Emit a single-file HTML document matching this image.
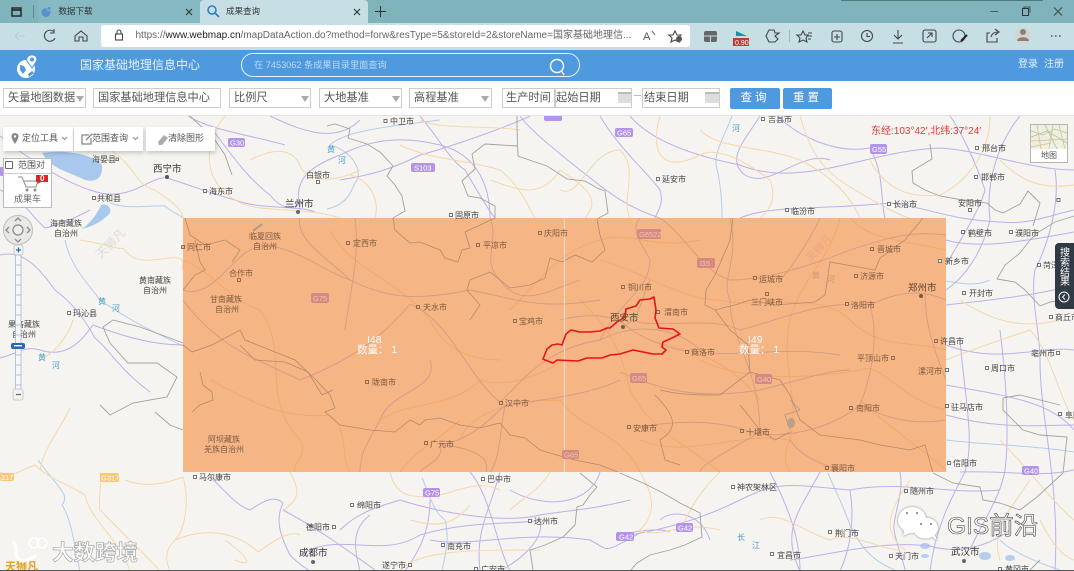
<!DOCTYPE html>
<html lang="zh"><head><meta charset="utf-8"><title>成果查询</title>
<style>
html,body{margin:0;padding:0;background:#f5f4f0}
#r{position:relative;width:1074px;height:571px;overflow:hidden;font-family:"Liberation Sans","Noto Sans CJK SC",sans-serif;filter:blur(.35px);background:#f5f4f0}
#r div,#r svg{position:absolute;box-sizing:border-box}
.f{border:1px solid #ccc;background:#fff;top:88px;height:20px;font-size:11.2px;color:#555;line-height:18px;padding-left:3px;white-space:nowrap;overflow:hidden}
.tri{width:0;height:0;border-left:4px solid transparent;border-right:4px solid transparent;border-top:6px solid #aaa;top:7px}
.cal{width:14px;height:11px;top:3px;background:#ddd;border-top:2px solid #bbb}
.btn{background:#4f9ade;color:#fff;top:88px;height:21px;border-radius:2px;font-size:11.5px;text-align:center;line-height:21px;letter-spacing:3px}
.ic{fill:none;stroke:#444;stroke-width:1.1}
.tool{top:127px;height:24px;background:#fff;box-shadow:1px 2px 4px rgba(0,0,0,.2)}
.tt{top:132px;font-size:9px;color:#555;line-height:13px;white-space:nowrap}
#m text{font-size:8px;fill:#444}
#m .b text{fill:#7c5a40}
#m .big{font-size:9.500px;fill:#333}
#m .riv text{fill:#4a9fd0;font-size:8px}
#m .sh text{font-size:7.500px;fill:#fff}
.pu{fill:none;stroke:#bdb0ea;stroke-width:1}
.or{fill:none;stroke:#f5d8ac;stroke-width:1}
.gr{fill:none;stroke:#a3a199;stroke-width:.9}
.bl{fill:none;stroke:#b5cdee;stroke-width:1}
.om{fill:none;stroke:#d49c84;stroke-width:.9}
.oo{fill:none;stroke:#f2a86c;stroke-width:.9}
.og{fill:none;stroke:#b58a6c;stroke-width:.8}
.sq{fill:#fff;stroke:#555;stroke-width:.8}
.bsq{fill:#f6b583;stroke:#7c5a40;stroke-width:.8}
</style></head><body><div id="r">

<!-- MAP -->
<svg id="m" style="left:0;top:116px" width="1074" height="455" viewBox="0 116 1074 455">
<rect x="0" y="116" width="1074" height="455" fill="#f5f4f0"/>
<path d="M42 153C60 150 90 152 102 165C103 176 98 183 85 180C70 172 52 170 42 153Z" fill="#a9c8ee"/>
<path d="M82 229C92 222 98 212 101 205C106 203 112 207 110 213C104 220 94 226 82 229Z" fill="#a9c8ee"/>
<g class="bl">
<path d="M110 203C130 210 150 205 165 206C172 212 178 214 183 218"/>
<path d="M65 240C70 265 85 280 100 300C115 310 128 320 183 346"/>
<path d="M38 460C60 490 70 495 62 505C72 520 75 550 80 571"/>
<path d="M327 209C345 205 350 195 355 183C365 170 350 150 330 145C345 130 400 125 440 120"/>
<path d="M732 116C725 135 715 150 716 165C720 180 722 200 722 218"/>
<path d="M946 281C960 283 975 287 990 280"/>
<path d="M422 478C430 495 432 510 445 520C450 540 445 555 442 571"/>
<path d="M828 473C835 490 845 510 850 525C860 545 870 560 895 570"/>
<path d="M946 440C985 445 1030 445 1074 452"/>
<path d="M1000 540C1010 550 1030 560 1060 570"/>
</g>
<ellipse cx="925" cy="546" rx="5" ry="3" fill="#b5cdee"/><ellipse cx="985" cy="556" rx="6" ry="4" fill="#b5cdee"/><ellipse cx="1010" cy="558" rx="5" ry="3" fill="#b5cdee"/><ellipse cx="925" cy="556" rx="4" ry="2" fill="#b5cdee"/>
<g class="pu">
<path d="M0 255C20 250 35 262 55 290C75 305 85 320 95 338C110 350 120 370 150 392"/>
<path d="M0 136C30 160 60 180 90 190C130 205 150 175 167 178C190 185 215 195 235 200C260 210 300 205 315 212"/>
<path d="M0 190C25 200 30 215 45 228C60 225 75 218 90 210"/>
<path d="M183 345C150 345 120 335 93 325C85 335 70 360 40 350C25 345 15 355 0 358"/>
<path d="M215 133C235 160 250 180 270 195C285 215 300 205 305 200"/>
<path d="M188 116C210 130 250 135 285 145"/>
<path d="M270 116C300 130 335 145 360 120"/>
<path d="M300 210C295 185 300 170 340 155C370 140 400 135 440 145C480 155 490 190 490 218"/>
<path d="M340 180C370 175 390 170 420 155C440 150 500 130 530 116"/>
<path d="M420 116C440 140 450 160 465 170C480 195 485 205 495 218"/>
<path d="M520 116C530 130 555 150 580 170C600 185 620 205 660 218"/>
<path d="M600 116C620 150 650 175 660 190C665 205 655 215 655 218"/>
<path d="M630 116C650 140 690 155 740 165C800 190 870 150 940 148C980 150 1030 170 1074 170"/>
<path d="M778 116C790 130 830 155 870 148C885 175 880 200 885 218"/>
<path d="M740 218C770 205 820 210 890 203C930 208 950 220 1000 222C1030 225 1050 215 1074 210"/>
<path d="M946 240C980 250 1030 240 1074 232"/>
<path d="M950 116C960 130 975 160 985 190C980 210 960 240 946 265"/>
<path d="M1020 116C1000 140 985 180 990 220C980 260 960 280 946 290"/>
<path d="M1055 170C1060 200 1050 240 1035 270C1030 300 1040 330 1040 360C1040 420 1060 480 1055 571"/>
<path d="M946 305C990 300 1040 295 1074 285"/>
<path d="M946 345C1000 365 1040 345 1074 350"/>
<path d="M946 385C1000 395 1050 400 1074 430"/>
<path d="M946 415C1000 430 1040 425 1074 425"/>
<path d="M960 472C1000 470 1040 478 1074 470"/>
<path d="M1000 330C1005 370 1010 430 1005 470C1000 500 980 525 970 550"/>
<path d="M960 340C965 400 975 440 965 472C950 500 935 530 930 571"/>
<path d="M210 477C225 490 235 505 250 510C265 500 275 495 283 503C275 520 280 535 290 555C295 560 300 565 310 571"/>
<path d="M283 510C320 530 340 545 375 570"/>
<path d="M340 530C360 510 385 505 400 500C430 510 500 525 540 515C570 510 590 510 630 500"/>
<path d="M300 555C340 530 380 560 420 535C470 520 520 525 540 520C545 540 520 560 500 571"/>
<path d="M360 571C355 550 350 530 370 515"/>
<path d="M430 540C470 548 520 530 590 540C610 550 600 555 640 533"/>
<path d="M430 500C430 530 420 550 405 571"/>
<path d="M470 472C490 495 495 540 510 571"/>
<path d="M500 472C490 510 475 530 480 571"/>
<path d="M510 490C545 510 590 505 600 472"/>
<path d="M630 535C660 530 700 520 740 500C780 480 790 485 850 490C900 480 950 495 1000 490"/>
<path d="M770 472C790 510 800 540 800 571"/>
<path d="M820 472C800 510 780 530 800 571"/>
<path d="M850 490C855 520 850 550 840 571"/>
<path d="M790 560C830 555 880 540 930 546C960 555 990 545 1010 530"/>
<path d="M660 520C670 510 700 510 710 540"/>
<path d="M620 535C640 530 660 528 670 532"/>
<path d="M900 472C905 495 890 520 895 535C900 555 905 565 905 571"/>
<path d="M760 116C745 140 725 160 745 175C770 190 800 150 830 160"/>
</g>
<g class="or">
<path d="M130 571C120 540 90 520 85 495C70 485 50 480 35 465C20 470 10 480 0 472"/>
<path d="M100 472C102 490 98 500 100 510C120 530 150 560 160 571"/>
<path d="M125 480C150 490 175 480 183 477C190 500 185 530 175 540C165 550 165 560 170 571"/>
<path d="M175 540C210 525 240 535 258 552C275 540 290 530 300 535"/>
<path d="M290 472C300 490 300 500 283 510"/>
<path d="M235 560C260 570 240 550 225 540"/>
<path d="M70 408C60 430 45 445 40 470"/>
<path d="M80 240C110 245 120 250 123 248C135 265 150 260 170 258C190 255 180 270 183 270"/>
<path d="M40 360C60 350 70 330 73 320"/>
<path d="M110 150C135 165 135 185 155 190C170 200 183 210 183 218"/>
<path d="M225 116C205 140 200 180 235 200C260 215 300 205 340 218"/>
<path d="M250 160C270 150 290 145 300 165C305 180 330 185 360 170"/>
<path d="M350 175C370 180 380 200 375 218"/>
<path d="M490 180C520 190 540 200 560 170C590 190 600 200 585 218"/>
<path d="M400 145C430 160 470 160 500 170C520 185 530 210 535 218"/>
<path d="M420 120C440 130 490 125 520 130"/>
<path d="M660 116C650 150 660 175 700 155C720 145 750 165 770 180C780 205 760 218 760 218"/>
<path d="M700 130C720 150 760 145 800 160C830 175 850 195 860 218"/>
<path d="M800 116C810 150 820 170 855 190C880 205 905 218 910 218"/>
<path d="M560 190C580 200 590 150 620 150C640 170 620 200 630 218"/>
<path d="M870 160C880 180 900 200 940 195C970 180 990 150 990 116"/>
<path d="M1000 160C1020 180 1040 190 1074 185"/>
<path d="M960 300C990 320 1020 330 1060 320"/>
<path d="M946 360C970 350 1000 340 1030 330C1050 350 1060 400 1074 420"/>
<path d="M1000 440C1030 470 1050 500 1074 520"/>
<path d="M640 472C650 490 660 510 640 530C660 540 680 520 720 530"/>
<path d="M720 472C700 490 690 510 680 530"/>
<path d="M760 520C780 510 800 530 830 540C850 530 880 550 900 550"/>
<path d="M910 480C890 510 880 530 905 550"/>
<path d="M1030 480C1010 510 990 530 1000 560"/>
<path d="M390 472C395 495 410 500 440 495C460 490 480 480 500 490"/>
<path d="M550 472C540 490 520 500 510 510"/>
<path d="M410 520C430 525 450 530 470 505"/>
<path d="M400 570C420 550 470 550 540 550"/>
<path d="M1040 520C1050 540 1060 555 1074 560"/>
</g>
<g class="gr">
<path d="M327 126L335 124 350 129 348 138 367 144 380 152 393 166 387 176 395 185 402 196 405 211 393 218"/>
<path d="M517 116L517 129 518 156 535 162 547 166 567 179 585 181 597 188 605 191 608 213 597 219"/>
<path d="M485 144L517 146M485 144L472 154 475 169 462 181 468 196 480 198 495 206 495 218"/>
<path d="M190 116L205 130 215 140 225 155 232 175"/>
<path d="M930 144L932 159 912 171 913 183 925 190 940 196 957 199 987 203 995 210 1003 213 1020 204 1028 191 1035 198 1040 203 1033 226"/>
<path d="M997 279L1005 265 1020 253 1030 240 1037 233 1055 222 1074 216" stroke="#9fa9a8"/>
<path d="M997 279L1015 282 1025 290 1040 306 1050 302 1074 300"/>
<path d="M620 473L643 483 663 493 680 503 700 513 702 537 685 545 670 550 650 555 637 563 630 571"/>
<path d="M933 473L953 483 980 487 983 500 1000 503 1020 510 1037 497 1050 485 1063 473 1067 437 1040 435 1023 430 1003 410 1003 398 1020 395 1040 400 1060 405"/>
<path d="M580 473L597 487 590 495 583 505 577 507 575 525 563 537 545 545 530 550 533 570"/>
<path d="M103 327L113 320 140 327 167 337 183 343M103 327L110 343 128 363 157 363 177 377 167 397 133 403 110 415 100 405"/>
<path d="M155 412L170 425 183 430"/>
<path d="M1040 560L1030 570"/>
</g>
<!-- overlay -->
<rect x="183" y="218" width="763" height="254" fill="#f79a55" fill-opacity=".7"/>
<clipPath id="cp"><rect x="183" y="218" width="763" height="254"/></clipPath>
<g clip-path="url(#cp)">
<g class="oo">
<path d="M183 260C210 270 230 300 260 310C290 350 260 400 300 440C310 455 290 465 295 472"/>
<path d="M210 380C250 400 280 420 330 415C350 430 340 460 350 472"/>
<path d="M380 420C410 400 450 410 480 380C510 390 550 370 564 360"/>
<path d="M510 310C540 280 560 250 600 240C630 230 650 250 700 240"/>
<path d="M600 260C640 270 680 300 720 300C760 310 820 290 850 320C880 350 910 340 946 350"/>
<path d="M840 218C830 260 800 280 790 320C780 360 800 400 790 440C780 460 790 472 790 472"/>
<path d="M700 360C740 380 800 380 860 370C880 360 900 400 946 410"/>
<path d="M640 440C690 460 740 430 790 440"/>
<path d="M330 230C350 270 400 280 430 320C445 350 470 360 500 360"/>
<path d="M460 440C470 410 520 400 560 400C580 430 620 430 640 472"/>
<path d="M580 300C600 320 620 340 630 390C650 430 680 440 720 472"/>
<path d="M850 218C870 240 900 240 946 250"/>
<path d="M650 340C680 350 720 350 760 400"/>
<path d="M400 472C415 450 440 440 460 420"/>
<path d="M860 400C880 420 910 440 946 470"/>
</g>
<g class="om">
<path d="M183 290C210 300 230 260 250 250C280 235 320 270 350 280C390 300 420 300 470 290C520 300 540 310 600 300"/>
<path d="M300 218C295 240 330 260 350 280M355 218C360 260 350 290 345 330"/>
<path d="M490 218C500 240 480 260 500 280C520 310 550 290 580 280"/>
<path d="M410 304C450 320 470 380 500 402C520 385 540 350 600 340C640 320 680 330 700 350"/>
<path d="M600 340C620 300 650 290 650 260C640 240 630 230 640 218"/>
<path d="M660 218C690 240 700 270 730 280C760 280 800 270 850 250C880 240 910 230 946 235"/>
<path d="M630 320C660 330 710 315 740 330C780 320 820 300 870 305C900 290 925 290 946 300"/>
<path d="M925 290C925 320 930 340 946 380"/>
<path d="M870 305C880 340 870 380 860 405C830 430 780 440 750 432C720 420 680 420 640 427"/>
<path d="M860 405C890 420 915 425 946 420"/>
<path d="M690 350C730 360 780 345 840 355"/>
<path d="M730 218C740 260 720 280 730 300C730 340 760 370 760 432C730 450 700 465 700 472"/>
<path d="M620 372C660 390 700 400 760 390C800 380 830 370 850 370"/>
<path d="M440 445C470 440 490 420 505 405C540 400 590 395 620 380"/>
<path d="M440 445C445 460 425 465 420 472M445 445C480 450 490 460 486 472"/>
<path d="M505 405C500 430 500 460 490 472"/>
<path d="M430 360C440 390 390 390 380 420C370 440 360 450 360 472"/>
<path d="M183 300C220 350 260 360 300 380C350 360 380 340 410 304"/>
<path d="M820 218C810 240 790 270 780 280"/>
<path d="M790 440C800 455 820 465 843 470"/>
<path d="M650 280C640 300 640 320 625 325"/>
<path d="M560 320C600 310 620 320 625 325C650 345 680 350 690 352"/>
</g>
<g class="og">
<path d="M185 218L190 235 205 245 225 240 240 250 232 262M195 240L200 262 205 270 195 275 183 290"/>
<path d="M183 345L192 352 212 345 240 330 245 340 270 350 295 360 316 380 330 395 335 408 325 412 340 425 370 430 395 432 410 420 420 425 425 420 440 418 460 425 480 428 500 423 510 435 525 438 540 450 560 456 575 460 600 465 620 473"/>
<path d="M200 372L203 385 212 392 213 400 200 405 192 412M240 345L255 360 285 362 308 372 322 395 333 390"/>
<path d="M393 218L395 230 410 243 420 242 440 250 445 258 458 262 462 250 470 248 465 232 480 225 495 218"/>
<path d="M597 219L600 235 605 250 592 262 575 255 562 262 550 258 545 278 530 285 510 288 490 272 470 280 467 290 480 305 470 320"/>
<path d="M733 218L730 240 728 245 715 275 706 290 705 305 715 310 735 305 750 300 775 305 815 302 825 295 830 262 875 270 880 258 905 240 923 218"/>
<path d="M715 310L730 330 748 345 750 372 780 380 790 395 800 420 820 435 860 440 880 445 910 450 925 445 933 473"/>
<path d="M660 390C680 395 700 395 720 395L750 372M655 395C680 420 675 430 660 440L665 460 680 465"/>
<path d="M740 405L760 430 775 440 790 432"/>
<path d="M790 400L800 410 785 415 790 430" stroke="#a89a8c"/>
</g>
</g>
<ellipse cx="791" cy="423" rx="4" ry="5" fill="#b9a08c"/>
<path d="M253 231L262 224" stroke="#a89a8c" stroke-width="2" fill="none"/>
<line x1="564.500" y1="218" x2="564.500" y2="472" stroke="#f8dcc8" stroke-width="1"/>
<path d="M543 359L547 349 552 345 558 344 562 345 566 334 571 330 580 332 590 332 600 331 607 328 610 328 617 322 625 317 626 309 636 306 640 300 650 299 654 297 656 310 655 318 659 328 673 329 680 334 672 338 663 342 662 347 666 350 662 354 653 354 633 350 620 354 610 355 602 358 587 358 578 361 557 360 553 363 545 360Z" fill="none" stroke="#e8121a" stroke-width="1.600" stroke-linejoin="round"/>
<!-- shields -->
<g class="sh">
<rect x="228" y="138" width="17" height="9" rx="2" fill="#b494ea"/><text x="230" y="145.500">G30</text>
<rect x="411" y="163" width="24" height="9" rx="2" fill="#b494ea"/><text x="414" y="170.500">S103</text>
<rect x="615" y="128" width="18" height="9" rx="2" fill="#b494ea"/><text x="617" y="135.500">G65</text>
<rect x="544" y="112" width="18" height="9" rx="2" fill="#b494ea"/>
<rect x="0" y="167" width="4" height="9" rx="1" fill="#b494ea"/>
<rect x="870" y="144" width="17" height="10" rx="2" fill="#b494ea"/><text x="872" y="152">G55</text>
<rect x="311" y="293" width="18" height="10" rx="2" fill="#d78a82"/><text x="313" y="301" style="fill:#f3c4ae">G75</text>
<rect x="637" y="229" width="24" height="10" rx="2" fill="#d78a82"/><text x="639" y="237" style="fill:#f3c4ae">G6522</text>
<rect x="697" y="258" width="18" height="10" rx="2" fill="#d78a82"/><text x="700" y="266" style="fill:#f3c4ae">G5</text>
<rect x="562" y="450" width="17" height="9" rx="2" fill="#d78a82"/><text x="564" y="457.500" style="fill:#f3c4ae">G65</text>
<rect x="630" y="373" width="17" height="10" rx="2" fill="#d78a82"/><text x="632" y="381" style="fill:#f3c4ae">G65</text>
<rect x="755" y="374" width="17" height="10" rx="2" fill="#d78a82"/><text x="757" y="382" style="fill:#f3c4ae">G40</text>
<rect x="423" y="488" width="17" height="9" rx="2" fill="#b494ea"/><text x="425" y="495.500">G75</text>
<rect x="616" y="532" width="18" height="9" rx="2" fill="#b494ea"/><text x="619" y="539.500">G42</text>
<rect x="676" y="523" width="17" height="9" rx="2" fill="#b494ea"/><text x="678" y="530.500">G42</text>
<rect x="1022" y="466" width="17" height="9" rx="2" fill="#b494ea"/><text x="1024" y="473.500">G40</text>
<rect x="100" y="473" width="19" height="9" rx="2" fill="#f6c873"/><text x="101" y="480.500">G317</text>
<rect x="0" y="473" width="14" height="8" rx="2" fill="#f6c873"/><text x="-5" y="480">G317</text>
</g>
<!-- plain labels -->
<g>
<rect class="sq" x="384" y="119.500" width="3" height="3"/><text x="390" y="124">中卫市</text>
<rect class="sq" x="761.500" y="117.500" width="3" height="3"/><text x="768" y="122">吉县市</text>
<text x="92" y="162">海晏县</text><rect class="sq" x="116" y="158" width="2.500" height="2.500"/>
<text x="153" y="172" class="big">西宁市</text><circle cx="167" cy="177" r="2" fill="#555"/>
<rect class="sq" x="203.500" y="189.500" width="3" height="3"/><text x="209" y="194">海东市</text>
<rect class="sq" x="92.500" y="196.500" width="3" height="3"/><text x="97" y="201">共和县</text>
<text x="306" y="178">白银市</text><rect class="sq" x="316.500" y="180.500" width="3" height="3"/>
<text x="285" y="207" class="big">兰州市</text><circle cx="298" cy="212" r="2" fill="#666"/>
<rect class="sq" x="656.500" y="177.500" width="3" height="3"/><text x="662" y="182">延安市</text>
<rect class="sq" x="785.500" y="208.500" width="3" height="3"/><text x="791" y="214">临汾市</text>
<rect class="sq" x="887.500" y="202.500" width="3" height="3"/><text x="893" y="207">长治市</text>
<rect class="sq" x="975.500" y="146.500" width="3" height="3"/><text x="982" y="151">邢台市</text>
<rect class="sq" x="974.500" y="175.500" width="3" height="3"/><text x="981" y="180">邯郸市</text>
<text x="958" y="206">安阳市</text><rect class="sq" x="968.500" y="208.500" width="3" height="3"/>
<rect class="sq" x="961.500" y="230.500" width="3" height="3"/><text x="968" y="236">鹤壁市</text>
<rect class="sq" x="1009.500" y="230.500" width="3" height="3"/><text x="1015" y="236">濮阳市</text>
<rect class="sq" x="938.500" y="259.500" width="3" height="3"/><text x="945" y="264">新乡市</text>
<rect class="sq" x="1037.500" y="263.500" width="3" height="3"/><text x="1043" y="268">菏泽市</text>
<rect class="sq" x="962.500" y="291.500" width="3" height="3"/><text x="969" y="296">开封市</text>
<rect class="sq" x="1049.500" y="315.500" width="3" height="3"/><text x="1055" y="320">商丘市</text>
<rect class="sq" x="1057" y="198.500" width="3" height="3"/>
<text x="1031" y="356">亳州市</text><rect class="sq" x="1056.500" y="351.500" width="3" height="3"/>
<rect class="sq" x="985.500" y="366.500" width="3" height="3"/><text x="991" y="371">周口市</text>
<rect class="sq" x="945.500" y="404.500" width="3" height="3"/><text x="951" y="410">驻马店市</text>
<rect class="sq" x="945.500" y="368.500" width="3" height="3"/>
<rect class="sq" x="1058.500" y="412.500" width="3" height="3"/><text x="1065" y="418">阜阳市</text>
<rect class="sq" x="947.500" y="461.500" width="3" height="3"/><text x="953" y="466">信阳市</text>
<rect class="sq" x="193.500" y="475.500" width="3" height="3"/><text x="199" y="480">马尔康市</text>
<rect class="sq" x="481.500" y="477.500" width="3" height="3"/><text x="487" y="482">巴中市</text>
<rect class="sq" x="731.500" y="485.500" width="3" height="3"/><text x="737" y="490">神农架林区</text>
<rect class="sq" x="904.500" y="489.500" width="3" height="3"/><text x="910" y="494">随州市</text>
<rect class="sq" x="350.500" y="503.500" width="3" height="3"/><text x="357" y="508">绵阳市</text>
<rect class="sq" x="528.500" y="519.500" width="3" height="3"/><text x="534" y="524">达州市</text>
<text x="306" y="530">德阳市</text><rect class="sq" x="332.500" y="525.500" width="3" height="3"/>
<text x="299" y="556" class="big">成都市</text><circle cx="313" cy="562" r="2" fill="#666"/>
<rect class="sq" x="441.500" y="543.500" width="3" height="3"/><text x="447" y="549">南充市</text>
<text x="382" y="568">遂宁市</text><rect class="sq" x="408.500" y="563.500" width="3" height="3"/>
<rect class="sq" x="474.500" y="567.500" width="3" height="3"/><text x="481" y="572">广安市</text>
<rect class="sq" x="828.500" y="530.500" width="3" height="3"/><text x="835" y="536">荆门市</text>
<rect class="sq" x="770.500" y="552.500" width="3" height="3"/><text x="777" y="558">宜昌市</text>
<rect class="sq" x="889.500" y="554.500" width="3" height="3"/><text x="895" y="559">天门市</text>
<text x="951" y="555" class="big">武汉市</text><circle cx="964" cy="561" r="2" fill="#666"/>
<rect class="sq" x="998.500" y="567.500" width="3" height="3"/><text x="1005" y="572">黄冈市</text>
<text x="50" y="226">海南藏族</text><text x="54" y="236">自治州</text>
<text x="139" y="283">黄南藏族</text><text x="143" y="293">自治州</text>
<rect class="sq" x="67.500" y="311.500" width="3" height="3"/><text x="73" y="316">玛沁县</text>
<text x="8" y="327">果洛藏族</text><text x="12" y="337">自治州</text>
<rect class="sq" x="449.500" y="213.500" width="3" height="3"/><text x="455" y="218">固原市</text>
<text x="940" y="344">许昌市</text>
</g>
<!-- labels on overlay -->
<g class="b">
<rect class="bsq" x="181.500" y="245.500" width="3" height="3"/><text x="187" y="250">同仁市</text>
<text x="249" y="239">临夏回族</text><text x="253" y="249">自治州</text>
<rect class="bsq" x="346.500" y="241.500" width="3" height="3"/><text x="353" y="246">定西市</text>
<rect class="bsq" x="476.500" y="243.500" width="3" height="3"/><text x="483" y="248">平凉市</text>
<rect class="bsq" x="538.500" y="231.500" width="3" height="3"/><text x="544" y="236">庆阳市</text>
<text x="229" y="276">合作市</text><rect class="bsq" x="237.500" y="278.500" width="3" height="3"/>
<text x="210" y="302">甘南藏族</text><text x="215" y="312">自治州</text>
<rect class="bsq" x="416.500" y="305.500" width="3" height="3"/><text x="423" y="310">天水市</text>
<rect class="bsq" x="513.500" y="319.500" width="3" height="3"/><text x="519" y="324">宝鸡市</text>
<rect class="bsq" x="621.500" y="285.500" width="3" height="3"/><text x="628" y="290">铜川市</text>
<rect class="bsq" x="656.500" y="310.500" width="3" height="3"/><text x="664" y="315">渭南市</text>
<text x="610" y="321" class="big" style="fill:#5b4030">西安市</text><circle cx="623" cy="327" r="2" fill="#7c5a40"/>
<rect class="bsq" x="753.500" y="276.500" width="3" height="3"/><text x="759" y="282">运城市</text>
<text x="751" y="305">三门峡市</text><rect class="bsq" x="765.500" y="292.500" width="3" height="3"/>
<rect class="bsq" x="870.500" y="247.500" width="3" height="3"/><text x="877" y="252">晋城市</text>
<rect class="bsq" x="854.500" y="274.500" width="3" height="3"/><text x="860" y="279">济源市</text>
<text x="908" y="291" class="big" style="fill:#5b4030">郑州市</text><circle cx="921" cy="296" r="2" fill="#7c5a40"/>
<rect class="bsq" x="845.500" y="302.500" width="3" height="3"/><text x="851" y="308">洛阳市</text>
<rect class="bsq" x="685.500" y="350.500" width="3" height="3"/><text x="691" y="355">商洛市</text>
<text x="857" y="361">平顶山市</text><rect class="bsq" x="891.500" y="356.500" width="3" height="3"/>
<text x="918" y="374">漯河市</text>
<rect class="bsq" x="934.500" y="339.500" width="3" height="3"/>
<rect class="bsq" x="849.500" y="406.500" width="3" height="3"/><text x="856" y="411">南阳市</text>
<rect class="bsq" x="740.500" y="429.500" width="3" height="3"/><text x="746" y="435">十堰市</text>
<rect class="bsq" x="627.500" y="425.500" width="3" height="3"/><text x="633" y="431">安康市</text>
<rect class="bsq" x="825.500" y="466.500" width="3" height="3"/><text x="831" y="471">襄阳市</text>
<rect class="bsq" x="499.500" y="401.500" width="3" height="3"/><text x="505" y="406">汉中市</text>
<rect class="bsq" x="365.500" y="380.500" width="3" height="3"/><text x="372" y="385">陇南市</text>
<rect class="bsq" x="424.500" y="441.500" width="3" height="3"/><text x="430" y="447">广元市</text>
<text x="208" y="442">阿坝藏族</text><text x="204" y="452">羌族自治州</text>
</g>
<g class="riv">
<text x="98" y="304">黄</text><text x="112" y="311">河</text>
<text x="38" y="360">黄</text><text x="52" y="368">河</text>
<text x="327" y="152">黄</text><text x="338" y="163">河</text>
<text x="732" y="131">河</text>
<text x="737" y="540">长</text><text x="752" y="548">江</text>
</g>
<text x="812" y="278" style="fill:#c79a7c">黄</text><text x="827" y="282" style="fill:#c79a7c">河</text>
<text x="367" y="343" style="fill:#fff;font-size:10.500px">I48</text><text x="357" y="353" style="fill:#fff;font-size:10.500px">数量： 1</text>
<text x="748" y="343" style="fill:#fff;font-size:10.500px">I49</text><text x="739" y="353" style="fill:#fff;font-size:10.500px">数量： 1</text>
<text x="871" y="134" style="fill:#e4363c;font-size:10px">东经:103°42′,北纬:37°24′</text>
<!-- faint stamps -->
<text x="92" y="248" transform="rotate(-45 110 243)" style="font-size:12px;fill:#dedcd7">天狮凡</text>
<text x="804" y="256" transform="rotate(-45 815 252)" style="font-size:11px;fill:#eba97f">天狮凡</text>
<!-- watermark -->
<text x="52" y="560" style="font-size:21.500px;font-weight:bold;fill:#fff;stroke:#a8a8a8;stroke-width:.7">大数跨境</text>
<text x="5" y="570" style="font-size:11px;fill:#e8a020;font-weight:bold">天狮凡</text>
<path d="M13 542C19 547 12 558 22 561C26 561 32 558 36 555" fill="none" stroke="#fff" stroke-width="3"/>
<circle cx="34" cy="543" r="4.800" fill="none" stroke="#fff" stroke-width="1.300"/><circle cx="42" cy="543" r="4.800" fill="none" stroke="#fff" stroke-width="1.300"/>
<!-- wechat logo -->
<g style="filter:drop-shadow(0 0 1px #777)">
<path d="M912 507C903 507 898 514 898 521C898 525 901 528 904 531L903 536 910 533C918 534 926 528 926 520C926 512 920 507 912 507Z" fill="#fff"/>
<ellipse cx="925.500" cy="528" rx="12.500" ry="10.500" fill="#fff"/><path d="M930 536L937 540 934 533Z" fill="#fff"/>
</g>
<circle cx="907" cy="513" r="1" fill="#777"/><circle cx="917" cy="513" r="1" fill="#777"/><circle cx="921" cy="524" r="1" fill="#777"/><circle cx="931" cy="524" r="1" fill="#777"/>
<text x="947" y="534" style="font-size:24.500px;fill:#fff;stroke:#444;stroke-width:.6">GIS前沿</text>
</svg>

<!-- Browser chrome -->
<div style="left:0;top:0;width:1074px;height:23px;background:#7fb4bd"></div>
<div style="left:841px;top:0;width:202px;height:1px;background:#4d7a82"></div>
<div style="left:38px;top:0;width:162px;height:23px;background:#86b9c1"></div>
<div style="left:200px;top:0;width:168px;height:23px;background:#c6dfe4;border-radius:4px 4px 0 0"></div>
<div style="left:0;top:23px;width:1074px;height:27px;background:#c6dfe4"></div>
<div style="left:101px;top:25px;width:589px;height:22px;background:#fff;border-radius:3px"></div>
<svg style="left:0;top:0" width="1074" height="50" viewBox="0 0 1074 50">
<rect x="12" y="8" width="9" height="8" fill="none" stroke="#222" stroke-width="1.400"/><path d="M12 10H21" stroke="#222" stroke-width="1.600"/>
<path d="M33.500 5V18" stroke="#5d8b93"/>
<circle cx="46" cy="12.500" r="4.500" fill="#5a8fd0"/><circle cx="49" cy="8.500" r="2" fill="#5a8fd0" stroke="#88bac2"/>
<path d="M186 9L192 15M192 9L186 15M354 9L360 15M360 9L354 15" stroke="#333" stroke-width="1.100"/>
<circle cx="212" cy="10" r="4" fill="none" stroke="#2b7bc4" stroke-width="1.500"/><path d="M215 13L219 17" stroke="#2b7bc4" stroke-width="1.600"/>
<path d="M375 11.500H386M380.500 6V17" stroke="#333" stroke-width="1"/>
<path d="M990.500 11.500H998" stroke="#555"/><rect x="1022.500" y="8.500" width="6" height="7" fill="none" stroke="#333"/><path d="M1024 8V7H1030V13" fill="none" stroke="#333" stroke-width=".7"/><path d="M1054 7.500L1062 15.500M1062 7.500L1054 15.500" stroke="#444"/>
<path d="M15 36H25M15 36L19 32M15 36L19 40" stroke="#b9cdd1" fill="none"/>
<path d="M54 32A5.500 5.500 0 1 0 55 38M54 29V33H50" class="ic"/>
<path d="M75 36L81 31 87 36V41H83V37H79V41H75Z" class="ic"/>
<rect x="115.500" y="34" width="7" height="6" class="ic"/><path d="M117 34V32A2 2 0 0 1 121 32V34" class="ic"/>
<text x="643" y="40" style="font-size:11px;fill:#555">A</text><path d="M652 31L655 35" stroke="#555"/>
<path d="M675 31L677 35 681 35 678 38 679 42 675 40 671 42 672 38 669 35 673 35Z" class="ic"/><circle cx="679" cy="39" r="3" fill="#555"/>
<rect x="704" y="31" width="13" height="11" rx="2" fill="#666"/><path d="M710.500 36V42M704 36H717" stroke="#c6dfe4"/>
<path d="M736 31L747 36H736Z" fill="#1d8bb8"/><rect x="733" y="38" width="16" height="8" fill="#c0393b"/><text x="735" y="45" style="font-size:7px;fill:#fff">0.90</text>
<path d="M769 30H774L775 33 779 33 775 36 778 39 775 42H769L766 36Z" class="ic"/>
<path d="M789.500 30V42" stroke="#9fb8bd"/>
<path d="M803 31L805 35 808 35 806 38 807 42 803 40 799 42 800 38 797 35 801 35Z" class="ic"/><path d="M808 33H812M808 36H812M808 39H811" class="ic"/>
<rect x="832" y="31" width="10" height="11" rx="2" class="ic"/><path d="M837 34V40M834 37H840" class="ic"/>
<circle cx="867" cy="36" r="5.500" class="ic"/><path d="M867 33V36.500H870" class="ic"/>
<path d="M898 30V39M894 35L898 39 902 35M893 43H903" class="ic"/>
<rect x="923" y="30" width="13" height="12" rx="2" class="ic"/><path d="M927 38L932 33M928 33H932V37" class="ic"/>
<circle cx="959" cy="36" r="6" class="ic"/><path d="M961 41L967 35" stroke="#222" stroke-width="2"/>
<path d="M990 33H987V42H997V38M991 37C992 33 995 32 998 32M995 29L999 32 995 35" class="ic"/>
<circle cx="1023" cy="36" r="8" fill="#d6d4cf"/><circle cx="1023" cy="32" r="3" fill="#8a8175"/><path d="M1017 41C1017 36 1029 36 1029 41Z" fill="#8a8175"/>
<path d="M1051 36H1052.500M1055 36H1056.500M1059 36H1060.500" stroke="#333" stroke-width="1.200"/>
</svg>
<div style="left:58.500px;top:5px;font-size:8.500px;color:#333;line-height:13px">数据下载</div>
<div style="left:226px;top:5px;font-size:8.500px;color:#333;line-height:13px">成果查询</div>
<div style="left:135.500px;top:28px;width:496px;font-size:10px;line-height:15px;color:#666;white-space:nowrap;overflow:hidden">https://<span style="color:#222">www.webmap.cn</span>/mapDataAction.do?method=forw&amp;resType=5&amp;storeId=2&amp;storeName=国家基础地理信...</div>

<!-- Blue header -->
<div style="left:0;top:50px;width:1074px;height:31px;background:#4f9ade"></div>
<svg style="left:15px;top:54px" width="24" height="25" viewBox="0 0 24 25">
<circle cx="11" cy="15" r="9" fill="#fff"/><path d="M5 11L9 12 11 16 8 20 5 16ZM13 20L17 17 19 19 14 23Z" fill="#4f9ade"/>
<path d="M17 1C13 1 11 4 12 7L17 14 21 8C23 4 21 1 17 1Z" fill="#fff" stroke="#4f9ade"/><circle cx="17" cy="5.500" r="2" fill="#4f9ade"/>
</svg>
<div style="left:80px;top:56px;font-size:12px;color:#e6f0fb;line-height:18px;white-space:nowrap">国家基础地理信息中心</div>
<div style="left:241px;top:53px;width:339px;height:24px;border:1px solid #e8f2fc;border-radius:12px"></div>
<div style="left:254px;top:58px;font-size:9.200px;color:#bcd9f4;line-height:14px;white-space:nowrap">在 7453062 条成果目录里面查询</div>
<svg style="left:548px;top:57px" width="20" height="20" viewBox="0 0 20 20"><circle cx="9" cy="9" r="6.500" fill="none" stroke="#fff" stroke-width="1.400"/><path d="M13.500 14L16 18" stroke="#fff" stroke-width="1.400"/></svg>
<div style="left:1018px;top:58px;font-size:10px;color:#e6f0fb;line-height:14px;white-space:nowrap">登录</div>
<div style="left:1044px;top:58px;font-size:10px;color:#e6f0fb;line-height:14px;white-space:nowrap">注册</div>

<!-- Filter bar -->
<div style="left:0;top:81px;width:1074px;height:35px;background:#fff;border-bottom:1px solid #e5e3de"></div>
<div class="f" style="left:3px;width:83px;padding-left:4px">矢量地图数据<div class="tri" style="left:72px"></div></div>
<div class="f" style="left:93px;width:128px;padding-left:4px">国家基础地理信息中心</div>
<div class="f" style="left:229px;width:82px;padding-left:4px">比例尺<div class="tri" style="left:71px"></div></div>
<div class="f" style="left:319px;width:83px;padding-left:4px">大地基准<div class="tri" style="left:72px"></div></div>
<div class="f" style="left:409px;width:83px;padding-left:4px">高程基准<div class="tri" style="left:71px"></div></div>
<div class="f" style="left:502px;width:53px;padding-left:3px">生产时间</div>
<div class="f" style="left:555px;width:77px;padding-left:0">起始日期<div class="cal" style="left:62px"></div></div>
<div style="left:634px;top:95px;width:7px;height:1px;background:#bbb"></div>
<div class="f" style="left:642px;width:78px;padding-left:1px">结束日期<div class="cal" style="left:62px"></div></div>
<div class="btn" style="left:730px;width:50px">查询</div>
<div class="btn" style="left:783px;width:49px">重置</div>

<!-- Map tools -->
<div class="tool" style="left:3px;width:70px"></div>
<div class="tool" style="left:74px;width:69px"></div>
<div class="tool" style="left:146px;width:69px"></div>
<svg style="left:3px;top:127px" width="212" height="25" viewBox="0 0 212 25">
<path d="M12 6A3.500 3.500 0 0 0 8.500 9.500C8.500 12 12 17 12 17S15.500 12 15.500 9.500A3.500 3.500 0 0 0 12 6Z" fill="#888"/><circle cx="12" cy="9.500" r="1.200" fill="#fff"/>
<path d="M59 10L61.500 12.500 64 10M130 10L132.500 12.500 135 10" fill="none" stroke="#888"/>
<path d="M86 8H79V17H88V11M83 13L89 7" fill="none" stroke="#888" stroke-width="1.300"/>
<path d="M155 15L161 8 165 11 159 18H156Z" fill="#aaa"/>
</svg>
<div class="tt" style="left:22px">定位工具</div>
<div class="tt" style="left:92px">范围查询</div>
<div class="tt" style="left:168px">清除图形</div>

<!-- 范围对 & cart -->
<div style="left:3px;top:158px;width:49px;height:50px;background:#fff;border:1px solid #bbb"></div>
<div style="left:4px;top:173px;width:47px;height:1px;background:#ccc"></div>
<div style="left:5px;top:161px;width:8px;height:8px;border:1px solid #666;background:#fff;border-radius:1px"></div>
<div style="left:18px;top:159px;font-size:9px;color:#555;line-height:13px;white-space:nowrap">范围对</div>
<svg style="left:16px;top:175px" width="34" height="18" viewBox="0 0 34 18">
<path d="M2 2H6L10 12H20L22 6H7" fill="none" stroke="#8a8f94" stroke-width="1"/><circle cx="11" cy="15" r="1.500" fill="#8a8f94"/><circle cx="19" cy="15" r="1.500" fill="#8a8f94"/>
<path d="M20 0H32V7H25L21 9 22 7H20Z" fill="#d8262c"/>
</svg>
<div style="left:40px;top:175px;width:6px;font-size:8px;line-height:8px;font-weight:bold;color:#fff">0</div>
<div style="left:14px;top:193px;font-size:9px;color:#666;line-height:13px;white-space:nowrap">成果车</div>

<!-- Nav control -->
<svg style="left:0;top:212px" width="36" height="195" viewBox="0 0 36 195">
<circle cx="18" cy="18" r="14.500" fill="#e8e8e6" stroke="#bdbdbd"/><circle cx="18" cy="18" r="5" fill="#eee" stroke="#888" stroke-width="1.200"/>
<path d="M15 9L18 6 21 9M15 27L18 30 21 27M9 15L6 18 9 21M27 15L30 18 27 21" fill="none" stroke="#8a8a8a" stroke-width="1.300"/>
<rect x="14" y="33" width="9" height="10" rx="2" fill="#f1f1f1" stroke="#ccc"/><path d="M16 38H21M18.500 35.500V40.500" stroke="#2d68b8" stroke-width="1.200"/>
<rect x="15.500" y="43" width="5.500" height="136" fill="#f5f7fb" stroke="#9eaec6" stroke-width=".7"/>
<path d="M15.500 53H21M15.500 63H21M15.500 73H21M15.500 83H21M15.500 93H21M15.500 103H21M15.500 113H21M15.500 123H21M15.500 143H21M15.500 153H21M15.500 163H21M15.500 173H21" stroke="#9eaec6" stroke-width=".7"/>
<rect x="11" y="131" width="14" height="6" rx="2" fill="#2d68b8"/><rect x="14" y="133" width="8" height="1.400" fill="#fff"/>
<rect x="13" y="177" width="10" height="11" rx="2" fill="#f1f1f1" stroke="#ccc"/><path d="M16 182.500H21" stroke="#666" stroke-width="1.200"/>
</svg>

<!-- base map thumb -->
<div style="left:1030px;top:124px;width:38px;height:39px;background:#fff;border:1px solid #b5b5b5"></div>
<svg style="left:1031px;top:125px" width="36" height="24" viewBox="0 0 36 24">
<rect width="36" height="24" fill="#eef0e6"/>
<path d="M0 6L12 10 24 4 36 8M6 0L10 24M22 0L18 24M0 16L36 14M28 0L34 24M0 22L20 18" fill="none" stroke="#d9c89a"/>
<path d="M0 12L16 6 36 18M14 0L26 24" fill="none" stroke="#b9c9a0"/>
</svg>
<div style="left:1041px;top:150px;font-size:8px;color:#555;line-height:12px;white-space:nowrap">地图</div>

<!-- search results side tab -->
<div style="left:1055px;top:243px;width:19px;height:66px;background:#2f3a45;border-radius:4px 0 0 4px"></div>
<div style="left:1060px;top:249px;width:10px;font-size:10px;line-height:9.800px;color:#fff">搜索结果</div>
<svg style="left:1057px;top:290px" width="14" height="14" viewBox="0 0 14 14"><circle cx="7" cy="7" r="5" fill="none" stroke="#fff"/><path d="M8 4.500L5.500 7 8 9.500" fill="none" stroke="#fff"/></svg>

<div style="left:0;top:570px;width:1074px;height:1px;background:#555"></div>
</div></body></html>
